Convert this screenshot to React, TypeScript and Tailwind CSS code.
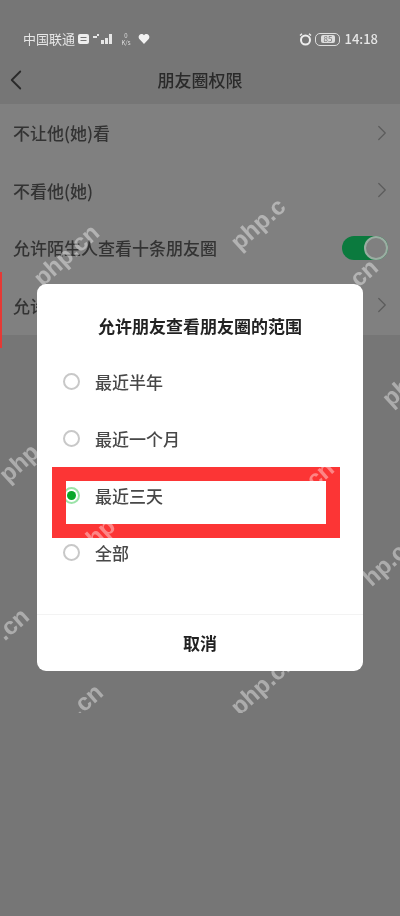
import { ChevronLeft, ChevronRight } from "lucide-react";

const ROWS = ["不让他(她)看", "不看他(她)", "允许陌生人查看十条朋友圈", "允许朋友查看朋友圈的范围"];

const OPTIONS = [
  { label: "最近半年", checked: false },
  { label: "最近一个月", checked: false },
  { label: "最近三天", checked: true },
  { label: "全部", checked: false },
];

// php.cn watermark pieces, they sit over everything and vanish on the white dialog
const MARKS = [
  { text: "php.cn", cls: "left-[27px] top-[243px]" },
  { text: "php.c", cls: "left-[226px] top-[212px]" },
  { text: ".cn", cls: "left-[344px] top-[263px]" },
  { text: "php", cls: "left-[-3px] top-[451px]" },
  { text: ".cn", cls: "left-[-5px] top-[612px]" },
  { text: "ph", cls: "left-[382px] top-[380px]" },
  { text: "hp.cn", cls: "left-[358px] top-[548px]" },
  { text: "cn", cls: "left-[306px] top-[462px]" },
  { text: "hp", cls: "left-[86px] top-[520px]" },
  { text: ".cn", cls: "left-[69px] top-[688px]" },
  { text: "php.cn", cls: "left-[224px] top-[672px]" },
];

function StatusBar() {
  return (
    <div className="flex h-[60px] items-end justify-between pb-[13px] pl-[23px] pr-[22px] text-[13px] leading-[16px] text-[#e6e6e6]">
      <div className="flex items-center">
        <span>中国联通</span>
        <svg width="11" height="10" viewBox="0 0 11 10" className="ml-[3px]">
          <rect width="11" height="10" rx="2" fill="#eeeeee" />
          <path d="M2.500 3.500h6M2.500 6.500h6" stroke="#767676" strokeWidth="1.200" />
        </svg>
        <svg width="20" height="12" viewBox="0 0 20 12" className="ml-[4px]">
          <path d="M0 3h4v2H0zM4 1h2v2H4zM8 7h3v4H8zM12 5h3v6h-3zM16 1h3v10h-3z" fill="#e6e6e6" />
        </svg>
        <span className="ml-[6px] flex w-[14px] flex-col items-center text-[6px] leading-[7px] text-[#dddddd]">
          <span>0</span>
          <span>K/s</span>
        </span>
        <svg width="12" height="10" viewBox="0 0 12 11" className="ml-[5px]">
          <path d="M6 11L.6 5.200C-.8 3 .8 0 3.200 0 4.400 0 5.400.6 6 1.500 6.600.6 7.600 0 8.800 0c2.400 0 4 3 2.600 5.200z" fill="#f2f2f2" />
        </svg>
      </div>
      <div className="flex items-center gap-[3px]">
        <svg width="13" height="13" viewBox="0 0 13 13">
          <circle cx="6.500" cy="7" r="4.500" fill="none" stroke="#eeeeee" strokeWidth="2" />
          <path d="M1 2.500L3 .8M12 2.500L10 .8" stroke="#eeeeee" strokeWidth="1.400" />
        </svg>
        <span className="flex h-[13px] w-[25px] items-center justify-center rounded-[5px] border border-[#dddddd] text-[8px] leading-none">
          <span className="rounded-[2px] bg-[#dddddd] px-[3px] text-[#767676]">85</span>
        </span>
        <span className="ml-[1px] font-medium">14:18</span>
      </div>
    </div>
  );
}

function Row({ label, index }: { label: string; index: number }) {
  return (
    <div className="flex h-[57.500px] items-center justify-between pl-[13px] pr-[5px]">
      <span className="text-[17px] font-medium text-[#333333]">{label}</span>
      {index === 2 ? (
        <span className="mr-[7px] flex h-[24px] w-[46px] items-center justify-end rounded-full bg-[#0b7a3e]">
          <span className="size-[24px] rounded-full border-[2px] border-[#9aaea2] bg-[#808080]" />
        </span>
      ) : (
        <ChevronRight className="size-[26px] text-[#5c5c5c]" strokeWidth={1.200} />
      )}
    </div>
  );
}

function Option({ label, checked }: { label: string; checked: boolean }) {
  return (
    <div className="flex h-[57px] items-center pl-[26px]">
      {checked ? (
        <span className="flex size-[17px] items-center justify-center rounded-full border-[2px] border-[#9be3a8]">
          <span className="size-[9px] rounded-full bg-[#09a82b]" />
        </span>
      ) : (
        <span className="size-[17px] rounded-full border-[2px] border-[#c8c8c8]" />
      )}
      <span className="ml-[15px] text-[17px] font-medium text-[#484848]">{label}</span>
    </div>
  );
}

export default function App() {
  return (
    <div
      className="relative h-[916px] w-[400px] overflow-hidden bg-[#767676] blur-[0.6px]"
      style={{ fontFamily: '"Noto Sans CJK SC", "Liberation Sans", sans-serif' }}
    >
      <StatusBar />
      <div className="flex h-[40px] items-center justify-center">
        <ChevronLeft className="absolute left-[-1px] size-[34px] text-[#2a2a2a]" strokeWidth={1.300} />
        <span className="text-[17px] font-medium text-[#2a2a2a]">朋友圈权限</span>
      </div>

      <div className="mt-[4px] h-[231px] bg-[#808080]">
        {ROWS.map((row, i) => (
          <Row key={row} label={row} index={i} />
        ))}
      </div>

      <div className="absolute left-0 top-[272px] h-[76px] w-[2px] bg-[#e53935]" />

      <div className="absolute left-[37px] top-[284px] flex h-[387px] w-[326px] flex-col rounded-[9px] bg-white">
        <div className="flex h-[69px] items-end justify-center pb-[15px] text-[17px] font-bold leading-[25px] text-[#222222]">
          允许朋友查看朋友圈的范围
        </div>
        <div>
          {OPTIONS.map((o) => (
            <Option key={o.label} label={o.label} checked={o.checked} />
          ))}
        </div>
        <div className="mt-[33px] h-[1px] bg-[#f3f3f3]" />
        <div className="flex flex-1 items-center justify-center text-[17px] font-bold text-[#222222]">
          取消
        </div>
      </div>

      <div className="absolute left-[52px] top-[467px] h-[71px] w-[288px] border-[14px] border-[#fc3535]" />

      <div className="absolute inset-x-0 top-0 h-[713px] overflow-hidden">
        {MARKS.map((m) => (
          <span
            key={m.cls}
            className={`absolute ${m.cls} -rotate-[42deg] text-[24px] font-bold leading-none text-white/40`}
            style={{ fontFamily: '"Liberation Sans", sans-serif' }}
          >
            {m.text}
          </span>
        ))}
      </div>
    </div>
  );
}
